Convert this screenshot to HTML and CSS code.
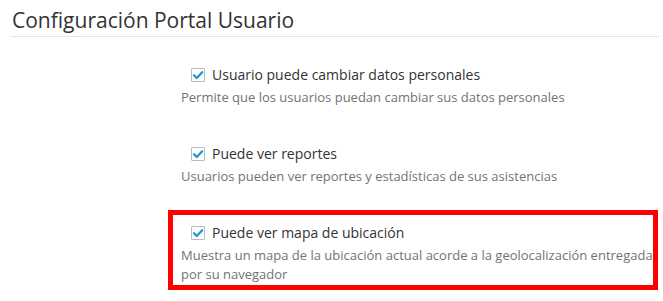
FILE: index.html
```html
<!DOCTYPE html>
<html lang="es">
<head>
    <meta charset="UTF-8">
    <meta name="viewport" content="width=device-width, initial-scale=1.0">
    <title>Configuración Portal Usuario</title>
    <link rel="stylesheet" href="styles.css">
</head>
<body>
    <div class="page">
        <h1 class="page-title">Configuración Portal Usuario</h1>

        <div class="options">
            <div class="option">
                <label class="check">
                    <span class="box">
                        <svg viewBox="0 0 12 12" width="12" height="12"><path d="M2 6.2 L4.8 9 L10.2 3.2" fill="none" stroke="#1c93d1" stroke-width="2.2" stroke-linecap="round" stroke-linejoin="round"/></svg>
                    </span>
                    Usuario puede cambiar datos personales
                </label>
                <p class="help">Permite que los usuarios puedan cambiar sus datos personales</p>
            </div>

            <div class="option">
                <label class="check">
                    <span class="box">
                        <svg viewBox="0 0 12 12" width="12" height="12"><path d="M2 6.2 L4.8 9 L10.2 3.2" fill="none" stroke="#1c93d1" stroke-width="2.2" stroke-linecap="round" stroke-linejoin="round"/></svg>
                    </span>
                    Puede ver reportes
                </label>
                <p class="help">Usuarios pueden ver reportes y estadísticas de sus asistencias</p>
            </div>

            <div class="option highlight">
                <label class="check">
                    <span class="box">
                        <svg viewBox="0 0 12 12" width="12" height="12"><path d="M2 6.2 L4.8 9 L10.2 3.2" fill="none" stroke="#1c93d1" stroke-width="2.2" stroke-linecap="round" stroke-linejoin="round"/></svg>
                    </span>
                    Puede ver mapa de ubicación
                </label>
                <p class="help">Muestra un mapa de la ubicación actual acorde a la geolocalización entregada por su navegador</p>
            </div>
        </div>
    </div>
</body>
</html>
```

FILE: styles.css
```css
* {
    box-sizing: border-box;
    margin: 0;
    padding: 0;
}

body {
    font-family: 'Open Sans', 'Noto Sans', sans-serif;
    background-color: white;
    color: #333;
}

.page {
    padding: 0 4px 0 11px;
}

.page-title {
    font-size: 21px;
    font-weight: 400;
    line-height: 30px;
    padding: 5px 0 1px 1px;
    border-bottom: 1px solid #e5e5e5;
    color: #333;
}

.options {
    margin-left: 157px;
    margin-top: 15px;
    width: 490px;
    display: flex;
    flex-direction: column;
    gap: 18px;
}

.option {
    border: 5px solid transparent;
    padding: 8px 0 1px 8px;
}

.option.highlight {
    border-color: #ff0000;
}

.check {
    display: flex;
    align-items: center;
    gap: 7px;
    font-size: 14px;
    line-height: 20px;
    color: #333;
    padding-left: 10px;
}

.box {
    width: 14px;
    height: 14px;
    border: 1px solid #b5bcc4;
    border-radius: 1px;
    background: white;
    display: flex;
    align-items: center;
    justify-content: center;
}

.help {
    margin-top: 3px;
    font-size: 13px;
    line-height: 19px;
    color: #737373;
}
```
